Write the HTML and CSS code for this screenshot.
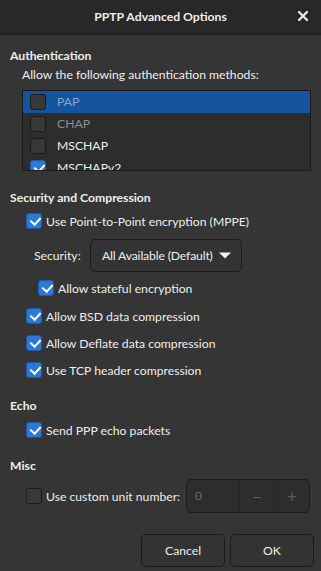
FILE: index.html
```html
<!DOCTYPE html>
<html>
<head>
<meta charset="utf-8">
<link rel="stylesheet" href="styles.css">
</head>
<body>
<div class="dialog">
  <header class="titlebar">
    <span class="title">PPTP Advanced Options</span>
    <span class="close"><svg width="10" height="10" viewBox="0 0 10 10"><path d="M1 1L9 9M9 1L1 9" stroke="#eeeeec" stroke-width="2.2" stroke-linecap="square"/></svg></span>
  </header>
  <main class="content">
    <div class="heading h-auth">Authentication</div>
    <div class="desc">Allow the following authentication methods:</div>
    <div class="list">
      <div class="lrow selected"><span class="cb"></span><span class="ltext dim-sel">PAP</span></div>
      <div class="lrow"><span class="cb"></span><span class="ltext dim">CHAP</span></div>
      <div class="lrow"><span class="cb"></span><span class="ltext">MSCHAP</span></div>
      <div class="lrow"><span class="cb on"></span><span class="ltext">MSCHAPv2</span></div>
    </div>

    <div class="heading h-sec">Security and Compression</div>
    <div class="check r-mppe"><span class="cb on"></span><span>Use Point-to-Point encryption (MPPE)</span></div>
    <div class="secrow">
      <span class="seclabel">Security:</span>
      <div class="combo"><span class="combotext">All Available (Default)</span><svg width="12" height="7" viewBox="0 0 12 7"><path d="M0 0.5H12L6 6.5Z" fill="#eeeeec"/></svg></div>
    </div>
    <div class="check r-state"><span class="cb on"></span><span>Allow stateful encryption</span></div>
    <div class="check r-bsd"><span class="cb on"></span><span>Allow BSD data compression</span></div>
    <div class="check r-next"><span class="cb on"></span><span>Allow Deflate data compression</span></div>
    <div class="check r-next"><span class="cb on"></span><span>Use TCP header compression</span></div>

    <div class="heading h-echo">Echo</div>
    <div class="check r-send"><span class="cb on"></span><span>Send PPP echo packets</span></div>

    <div class="heading h-echo">Misc</div>
    <div class="unitrow">
      <div class="check"><span class="cb"></span><span>Use custom unit number:</span></div>
      <div class="spin">
        <span class="spinval">0</span>
        <span class="spinbtn">−</span>
        <span class="spinbtn">+</span>
      </div>
    </div>

    <div class="actions">
      <button class="btn cancel">Cancel</button>
      <button class="btn ok">OK</button>
    </div>
  </main>
</div>
</body>
</html>
```
FILE: styles.css
```css
* { box-sizing: border-box; }
html, body {
  margin: 0;
  padding: 0;
  width: 321px;
  height: 571px;
  overflow: hidden;
  background: #353535;
  font-family: Lato, "Noto Sans", sans-serif;
  font-size: 12.2px;
  color: #eeeeec;
}
.dialog { width: 321px; height: 571px; background: #353535; }
.titlebar {
  height: 35px;
  background: #282828;
  border-bottom: 1px solid #1b1b1b;
  display: flex;
  align-items: center;
  justify-content: center;
  position: relative;
}
.title { font-weight: bold; margin-top: -2px; }
.close {
  position: absolute;
  right: 13px;
  top: 11px;
  width: 10px;
  height: 10px;
  display: flex;
}
.content { padding: 0 7px 0 10px; display: flex; flex-direction: column; }
.heading { font-weight: bold; height: 18px; line-height: 18px; }
.h-auth { margin-top: 12px; }
.desc { height: 18px; line-height: 18px; margin: 1px 0 0 12px; white-space: nowrap; }
.list {
  margin: 6px 0 0 12px;
  width: 289px;
  height: 81px;
  background: #2d2d2d;
  border: 1px solid #1b1b1b;
  overflow: hidden;
  flex: none;
}
.lrow {
  height: 22px;
  flex: none;
  display: flex;
  align-items: center;
  padding-left: 7px;
  gap: 11px;
}
.lrow.selected { background: #15539e; }
.ltext { line-height: 22px; }
.dim { color: #8b8e8f; }
.dim-sel { color: #8aa6c8; }
.cb {
  flex: none;
  width: 16px;
  height: 16px;
  border-radius: 3px;
  border: 1px solid #1b1b1b;
  background: #383838;
  position: relative;
}
.cb.on {
  background: #2b78d6;
  border-color: #1c5aa4;
}
.cb.on::after {
  content: "";
  position: absolute;
  width: 5px;
  height: 8px;
  border-right: 2.5px solid #fff;
  border-bottom: 2.5px solid #fff;
  transform: rotate(42deg);
  top: 1px;
  left: 4.5px;
}
.h-sec { margin-top: 18px; }
.check {
  height: 18px;
  display: flex;
  align-items: center;
  gap: 4px;
  margin-left: 16px;
  white-space: nowrap;
}
.r-mppe { margin-top: 5px; }
.secrow {
  margin: 9px 0 0 24px;
  height: 32px;
  display: flex;
  align-items: center;
}
.seclabel { width: 56px; flex: none; }
.combo {
  flex: none;
  width: 152px;
  height: 33px;
  border: 1px solid #1b1b1b;
  border-radius: 5px;
  background: #333333;
  display: flex;
  align-items: center;
  padding: 0 10px 0 11px;
  justify-content: space-between;
  white-space: nowrap;
}
.combotext { letter-spacing: -0.15px; }
.r-state { margin: 8px 0 0 28px; }
.r-bsd { margin-top: 10px; }
.r-next { margin-top: 9px; }
.h-echo { margin-top: 18px; }
.r-send { margin-top: 6px; }
.unitrow {
  margin-top: 4px;
  height: 34px;
  display: flex;
  align-items: center;
  justify-content: space-between;
  padding-right: 4px;
}
.unitrow .check { margin-left: 16px; }
.spin {
  flex: none;
  width: 124px;
  height: 34px;
  border: 1px solid #1b1b1b;
  border-radius: 5px;
  background: #2d2d2d;
  display: flex;
  color: #6a6a6a;
}
.spinval { width: 52px; padding-left: 8px; line-height: 32px; }
.spinbtn {
  flex: 1;
  border-left: 1px solid #282828;
  display: flex;
  align-items: center;
  justify-content: center;
  font-size: 18px;
  color: #5a5a5a;
}
.actions {
  margin-top: 21px;
  display: flex;
  justify-content: flex-end;
  gap: 5px;
}
.btn {
  height: 33px;
  border: 1px solid #1b1b1b;
  border-radius: 5px;
  background: #333333;
  color: #eeeeec;
  font-family: inherit;
  font-size: 12.2px;
  padding: 0;
}
.cancel { width: 84px; }
.ok { width: 84px; }
```
